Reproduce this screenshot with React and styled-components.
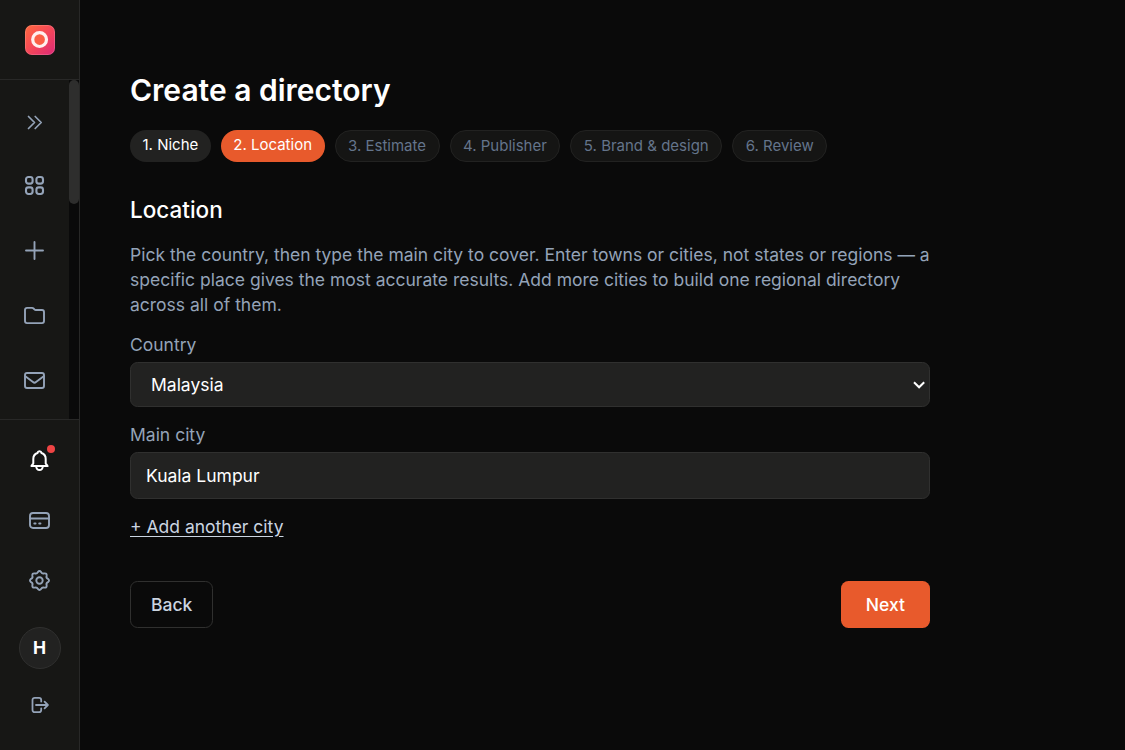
import { useState } from "react";
import styled, { createGlobalStyle, css } from "styled-components";

const GlobalStyle = createGlobalStyle`
  *, *::before, *::after {
    box-sizing: border-box;
  }

  body {
    margin: 0;
    background: #0a0a0a;
    color: #ffffff;
    font-family: Inter, "Liberation Sans", sans-serif;
    font-size: 17.5px;
    line-height: 25px;
  }

  button, input {
    font: inherit;
    color: inherit;
  }
`;

const Layout = styled.div`
  display: flex;
  height: 100vh;
  overflow: hidden;
`;

const Sidebar = styled.aside`
  display: flex;
  flex-direction: column;
  flex: none;
  width: 80px;
  background: #171715;
  border-right: 1px solid #282827;
`;

const SidebarHeader = styled.div`
  display: flex;
  align-items: center;
  justify-content: center;
  flex: none;
  height: 80px;
  padding-left: 1px;
  border-bottom: 1px solid #282827;
`;

const SidebarBody = styled.div`
  display: flex;
  height: 339px;
`;

const Nav = styled.nav`
  display: flex;
  flex-direction: column;
  align-items: center;
  flex: 1;
  padding-top: 12px;
`;

const NavButton = styled.button`
  display: flex;
  align-items: center;
  justify-content: center;
  flex: none;
  width: 50px;
  height: ${({ $height }) => $height || 65}px;
  padding: 0;
  border: 0;
  background: none;
  color: ${({ $active }) => ($active ? "#ffffff" : "#94a3b8")};
  cursor: pointer;
`;

const ScrollTrack = styled.div`
  width: 10px;
  background: #0a0a0a;
`;

const ScrollThumb = styled.div`
  height: 124px;
  border-radius: 5px;
  background: #2e2e2d;
`;

const SidebarFooter = styled.div`
  display: flex;
  flex-direction: column;
  align-items: center;
  flex: 1;
  padding-top: 10px;
  border-top: 1px solid #282827;
`;

const BellWrap = styled.span`
  position: relative;
  display: flex;
`;

const Badge = styled.span`
  position: absolute;
  top: -3px;
  right: -3px;
  width: 8px;
  height: 8px;
  border-radius: 50%;
  background: #ef4444;
`;

const Avatar = styled.div`
  display: flex;
  align-items: center;
  justify-content: center;
  width: 42px;
  height: 42px;
  margin: 17px 0 11px 1px;
  padding: 0 1px 1px 0;
  border: 1px solid #30302f;
  border-radius: 50%;
  background: #222221;
  font-weight: 700;
`;

const Main = styled.main`
  flex: 1;
  padding: 70px 50px 0;
`;

const Wizard = styled.div`
  width: 800px;
`;

const Title = styled.h1`
  margin: 0 0 20px;
  font-size: 30px;
  font-weight: 600;
  line-height: 40px;
`;

const Steps = styled.ol`
  display: flex;
  gap: 10px;
  margin: 0 0 30px;
  padding: 0;
  list-style: none;
`;

const Step = styled.li`
  height: 32px;
  padding: 5px 12.5px;
  border-radius: 16px;
  font-size: 15px;
  line-height: 20px;
  white-space: nowrap;

  ${({ $state }) =>
    $state === "done" &&
    css`
      background: #222221;
    `}

  ${({ $state }) =>
    $state === "current" &&
    css`
      background: #e85a2c;
    `}

  ${({ $state }) =>
    $state === "todo" &&
    css`
      border: 1px solid #222221;
      background: #151514;
      color: #64748b;
    `}
`;

const SectionTitle = styled.h2`
  margin: 0 0 15px;
  font-size: 22.5px;
  font-weight: 500;
  line-height: 35px;
`;

const Description = styled.p`
  margin: 0 0 15px;
  color: #94a3b8;
`;

const Field = styled.div`
  margin-bottom: 15px;
`;

const Label = styled.label`
  display: block;
  margin-bottom: 5px;
  color: #94a3b8;
`;

const SelectBox = styled.button`
  display: flex;
  align-items: center;
  justify-content: space-between;
  width: 100%;
  height: 45px;
  padding: 0 3px 0 20px;
  border: 1px solid #30302f;
  border-radius: 7.5px;
  background: #222221;
  text-align: left;
`;

const Input = styled.input`
  display: block;
  width: 100%;
  height: 47px;
  padding: 0 15px;
  border: 1px solid #30302f;
  border-radius: 7.5px;
  background: #222221;
  outline: none;
`;

const LinkButton = styled.button`
  display: block;
  padding: 0;
  border: 0;
  background: none;
  color: #cbd5e1;
  text-decoration: underline;
  text-underline-offset: 3px;
  cursor: pointer;
`;

const Actions = styled.div`
  display: flex;
  justify-content: space-between;
  margin-top: 42px;
`;

const Button = styled.button`
  height: 47px;
  padding: 0 ${({ $primary }) => ($primary ? "25px" : "20px")};
  border: ${({ $primary }) => ($primary ? "0" : "1px solid #30302f")};
  border-radius: 7.5px;
  background: ${({ $primary }) => ($primary ? "#e85a2c" : "transparent")};
  color: ${({ $primary }) => ($primary ? "#ffffff" : "#cbd5e1")};
  font-weight: 500;
  cursor: pointer;
`;

const Icon = ({ children, size = 25, stroke = 1.9 }) => (
  <svg
    width={size}
    height={size}
    viewBox={`0 0 ${size} ${size}`}
    fill="none"
    stroke="currentColor"
    strokeWidth={stroke}
    strokeLinecap="round"
    strokeLinejoin="round"
  >
    {children}
  </svg>
);

const Logo = () => (
  <svg width="30" height="30" viewBox="0 0 30 30">
    <defs>
      <linearGradient id="logo" x1="0" y1="0" x2="1" y2="1">
        <stop offset="0" stopColor="#ff6a3d" />
        <stop offset="0.5" stopColor="#f54758" />
        <stop offset="1" stopColor="#dc2878" />
      </linearGradient>
    </defs>
    <rect width="30" height="30" rx="7" fill="url(#logo)" />
    <rect x="0.5" y="0.5" width="29" height="29" rx="6.5" fill="none" stroke="#fff" strokeOpacity="0.16" />
    <circle cx="14.6" cy="14.6" r="6.9" fill="#fb6045" stroke="#fff0ee" strokeWidth="3.2" />
  </svg>
);

const ExpandIcon = () => (
  <Icon stroke={1.7}>
    <path d="M6.5 6.5l6 6-6 6M13.2 6.5l6 6-6 6" />
  </Icon>
);

const GridIcon = () => (
  <Icon stroke={2.1}>
    <rect x="4" y="4" width="6.6" height="6.6" rx="2.4" />
    <rect x="14.4" y="4" width="6.6" height="6.6" rx="2.4" />
    <rect x="4" y="14.4" width="6.6" height="6.6" rx="2.4" />
    <rect x="14.4" y="14.4" width="6.6" height="6.6" rx="2.4" />
  </Icon>
);

const PlusIcon = () => (
  <Icon stroke={1.9}>
    <path d="M12.5 4v17M4 12.5h17" />
  </Icon>
);

const FolderIcon = () => (
  <Icon stroke={1.9}>
    <path d="M3 6.9a2 2 0 0 1 2-2h5.1a2 2 0 0 1 1.4.6l.9.9a2 2 0 0 0 1.4.6H20a2 2 0 0 1 2 2v9.1a2 2 0 0 1-2 2H5a2 2 0 0 1-2-2z" />
  </Icon>
);

const MailIcon = () => (
  <Icon>
    <rect x="3" y="5" width="19" height="15" rx="2" />
    <path d="M3.3 8.3l7.7 5.8a2.4 2.4 0 0 0 3 0l7.7-5.8" />
  </Icon>
);

const BellIcon = () => (
  <Icon stroke={2}>
    <path d="M12.5 3.3a2 2 0 0 1 2 1.7 6.3 6.3 0 0 1 4.2 6v4.4l1.9 2.7H4.4l1.9-2.7V11a6.3 6.3 0 0 1 4.2-6 2 2 0 0 1 2-1.7z" />
    <path d="M9.2 18.3a3.3 3.8 0 0 0 6.6 0" />
  </Icon>
);

const CardIcon = () => (
  <Icon stroke={1.9}>
    <rect x="3" y="5" width="19" height="15" rx="3" />
    <path d="M3 10.5h19M7.3 15.5h1.3M12.2 15.5h1.3" />
  </Icon>
);

const polar = (radius, degrees) => {
  const angle = (degrees * Math.PI) / 180;
  return `${(12.5 + radius * Math.cos(angle)).toFixed(2)} ${(12.5 + radius * Math.sin(angle)).toFixed(2)}`;
};

// eight rounded teeth, 45 degrees apart
const gearPath = `M${polar(8.6, -11)}${[0, 45, 90, 135, 180, 225, 270, 315]
  .map((a) => `Q${polar(10.6, a)} ${polar(8.6, a + 11)}Q${polar(6.9, a + 22.5)} ${polar(8.6, a + 34)}`)
  .join("")}Z`;

const GearIcon = () => (
  <Icon stroke={1.9}>
    <path d={gearPath} />
    <circle cx="12.5" cy="12.5" r="3.2" />
  </Icon>
);

const LogoutIcon = () => (
  <Icon size={20} stroke={1.8}>
    <path d="M11.2 6.5V5A2.2 2.2 0 0 0 9 2.8H4.7A2.2 2.2 0 0 0 2.5 5v10a2.2 2.2 0 0 0 2.2 2.2H9a2.2 2.2 0 0 0 2.2-2.2v-1.5M6 10h11.8M14.6 6.7l3.3 3.3-3.3 3.3" />
  </Icon>
);

const ChevronIcon = () => (
  <svg width="13" height="10" viewBox="0 0 13 10" fill="none" stroke="#fff" strokeWidth="2">
    <path d="M1 2.2l5.1 5.1 5.1-5.1" />
  </svg>
);

const navItems = [
  { label: "Dashboard", icon: GridIcon },
  { label: "New directory", icon: PlusIcon },
  { label: "Projects", icon: FolderIcon },
  { label: "Messages", icon: MailIcon },
];

const steps = ["Niche", "Location", "Estimate", "Publisher", "Brand & design", "Review"];

const stepState = (index, current) => {
  if (index < current) return "done";
  return index === current ? "current" : "todo";
};

const App = () => {
  const [city, setCity] = useState("Kuala Lumpur");
  const current = 1;

  return (
    <Layout>
      <GlobalStyle />
      <Sidebar>
        <SidebarHeader>
          <Logo />
        </SidebarHeader>
        <SidebarBody>
          <Nav>
            <NavButton $height={61} aria-label="Expand">
              <ExpandIcon />
            </NavButton>
            {navItems.map(({ label, icon: NavIcon }) => (
              <NavButton key={label} aria-label={label}>
                <NavIcon />
              </NavButton>
            ))}
          </Nav>
          <ScrollTrack>
            <ScrollThumb />
          </ScrollTrack>
        </SidebarBody>
        <SidebarFooter>
          <NavButton $height={60} $active aria-label="Notifications">
            <BellWrap>
              <BellIcon />
              <Badge />
            </BellWrap>
          </NavButton>
          <NavButton $height={60} aria-label="Billing">
            <CardIcon />
          </NavButton>
          <NavButton $height={60} aria-label="Settings">
            <GearIcon />
          </NavButton>
          <Avatar>H</Avatar>
          <NavButton $height={50} aria-label="Log out">
            <LogoutIcon />
          </NavButton>
        </SidebarFooter>
      </Sidebar>
      <Main>
        <Wizard>
          <Title>Create a directory</Title>
          <Steps>
            {steps.map((step, index) => (
              <Step key={step} $state={stepState(index, current)}>
                {index + 1}. {step}
              </Step>
            ))}
          </Steps>
          <SectionTitle>Location</SectionTitle>
          <Description>
            Pick the country, then type the main city to cover. Enter towns or cities, not states or
            regions — a specific place gives the most accurate results. Add more cities to build one
            regional directory across all of them.
          </Description>
          <Field>
            <Label>Country</Label>
            <SelectBox>
              Malaysia
              <ChevronIcon />
            </SelectBox>
          </Field>
          <Field>
            <Label htmlFor="city">Main city</Label>
            <Input id="city" value={city} onChange={(e) => setCity(e.target.value)} />
          </Field>
          <LinkButton>+ Add another city</LinkButton>
          <Actions>
            <Button>Back</Button>
            <Button $primary>Next</Button>
          </Actions>
        </Wizard>
      </Main>
    </Layout>
  );
};

export default App;
